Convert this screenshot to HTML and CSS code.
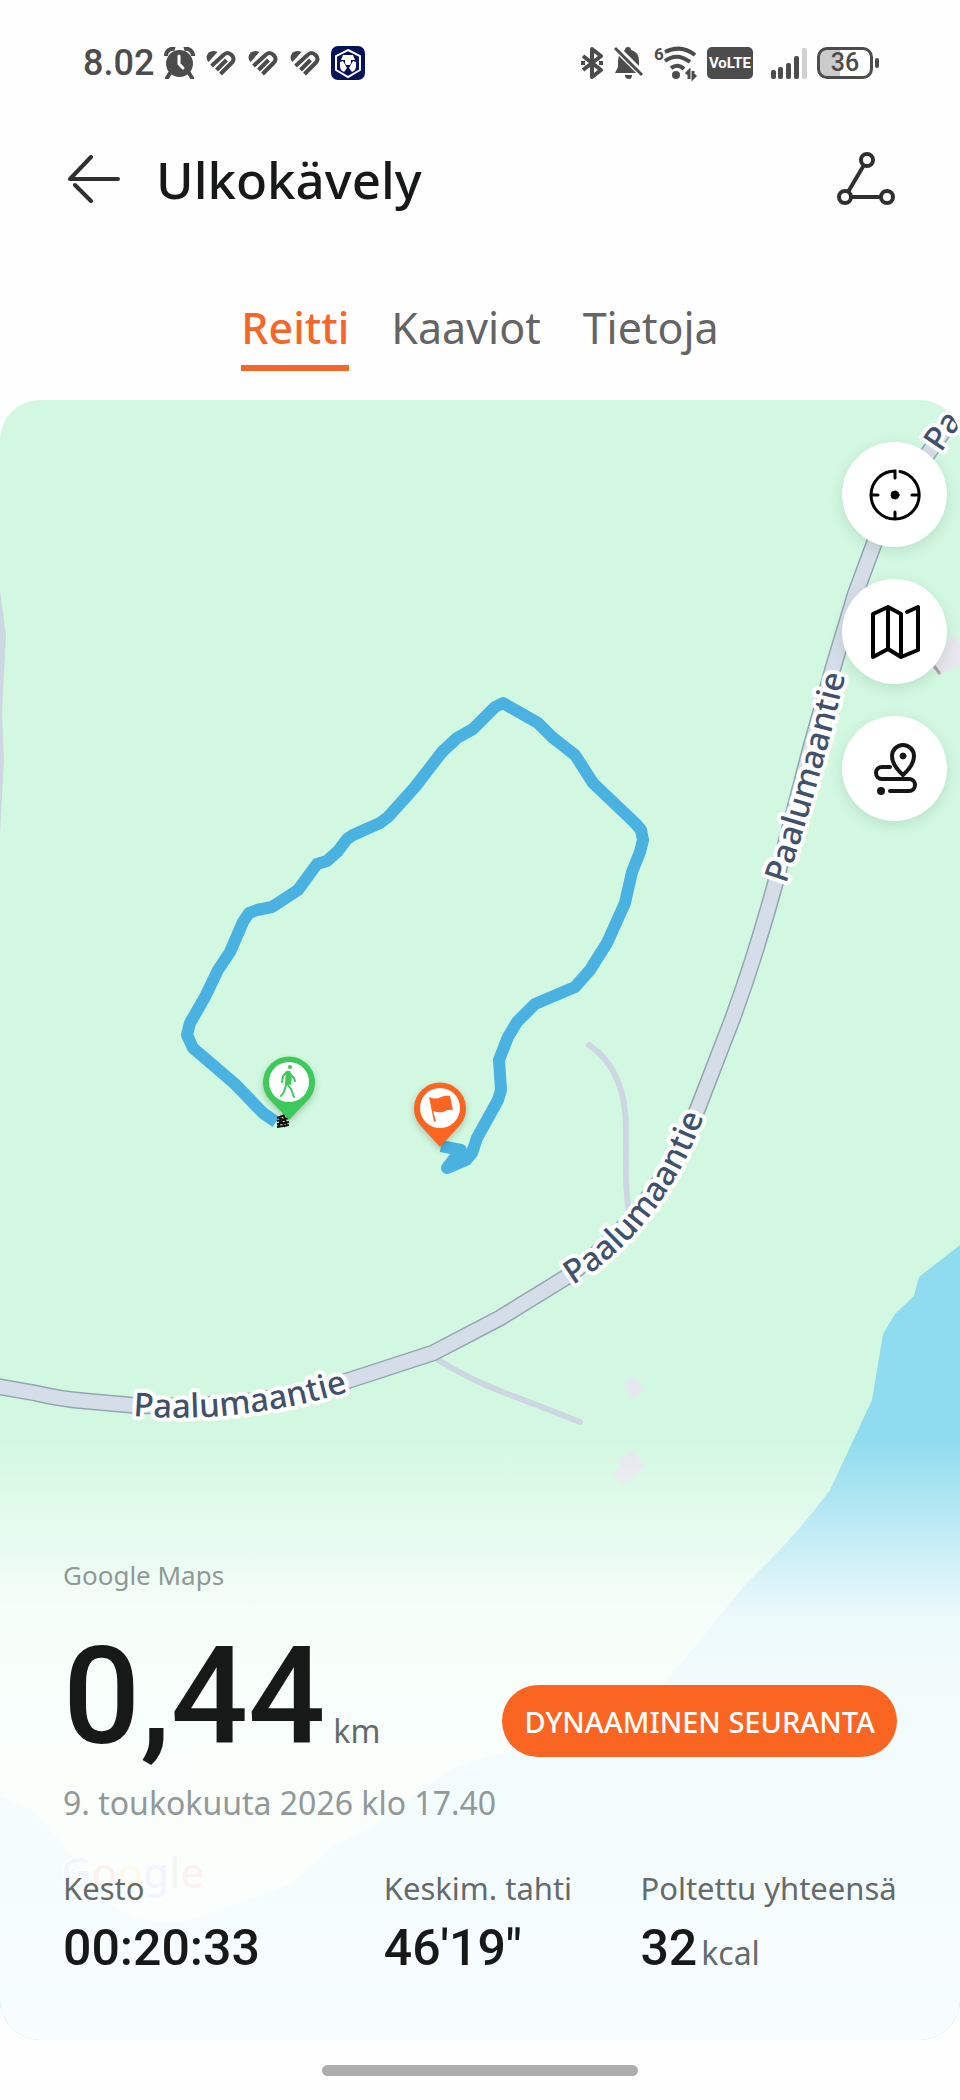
FILE: index.html
```html
<!DOCTYPE html>
<html lang="fi">

<head>
    <meta charset="UTF-8">
    <meta name="viewport" content="width=device-width, initial-scale=1.0">
    <title>Ulkokävely</title>
    <link rel="stylesheet" href="styles.css">
</head>

<body>

    <div class="status-bar">
        <div class="status-group">
            <span class="time">8.02</span>
            <svg width="31" height="32" viewBox="0 0 31 32" fill="#4c4c4c">
                <circle cx="15.500" cy="16.500" r="13.500" />
                <path d="M2 9a7 7 0 0 1 9-7M29 9a7 7 0 0 0-9-7" fill="none" stroke="#4c4c4c" stroke-width="4" />
                <path d="M6 26l-3 5M25 26l3 5" stroke="#4c4c4c" stroke-width="4" stroke-linecap="round" />
                <path d="M15 9v8l4 4" fill="none" stroke="#fff" stroke-width="3" stroke-linecap="round" />
            </svg>
            <svg class="heart" viewBox="0 0 29 26"><use href="#heart" /></svg>
            <svg class="heart" viewBox="0 0 29 26"><use href="#heart" /></svg>
            <svg class="heart" viewBox="0 0 29 26">
                <g id="heart" fill="none" stroke="#4c4c4c" stroke-width="4">
                    <path d="M2 12Q0 10 0 7Q1 1 7 1Q9 1 11 2z" fill="#4c4c4c" stroke="none" />
                    <path d="M5 16L17 5Q21 1 25 5T25 13L14 24" />
                    <path d="M10 20L20 10" />
                </g>
            </svg>
            <svg width="34" height="34" viewBox="0 0 34 34">
                <rect width="34" height="34" rx="7" fill="#04125a" />
                <path d="M17 4l12 6v14l-12 7-12-7V10z" fill="none" stroke="#fff" stroke-width="2" />
                <path d="M12 9h10l2 5H10z" fill="#fff" />
                <path d="M14 14h6v3l-1 2h-4l-1-2z" fill="#fff" />
                <path d="M9 16l3-1 4 7-3 4-3-2-1-3zM25 16l-3-1-4 7 3 4 3-2 1-3z" fill="#fff" />
            </svg>
        </div>
        <div class="status-group">
            <svg width="24" height="32" viewBox="0 0 24 32" fill="none" stroke="#4c4c4c" stroke-width="4" stroke-linejoin="round">
                <path d="M3 9l18 14-9 7V2l9 7L3 23" />
                <path d="M1 16h4M19 16h4" />
            </svg>
            <svg width="30" height="34" viewBox="0 0 30 34" fill="#4c4c4c">
                <path d="M14 1q3 0 3 3 8 2 8 11v6l3 6H1l3-6v-6q0-8 7-11 0-3 3-3z" />
                <path d="M11 29h7q0 4-3 4-4 0-4-4z" />
                <path d="M0 0l29 29" stroke="#fefefe" stroke-width="7" />
                <path d="M1 2l27 27" stroke="#4c4c4c" stroke-width="3" />
            </svg>
            <svg class="wifi" width="43" height="34" viewBox="0 0 43 34" fill="none" stroke="#4c4c4c" stroke-width="4">
                <text x="0" y="14" class="wifi-gen">6</text>
                <path d="M11 6q16-8 30 3" />
                <path d="M11 15q12-9 25 1M17 22q7-5 13 1" />
                <circle cx="22" cy="29" r="4" fill="#4c4c4c" stroke="none" />
                <path d="M32 28l3-3v8M39 25v7l3-3" stroke-width="3" />
            </svg>
            <span class="volte">VoLTE</span>
            <svg width="44" height="32" viewBox="0 0 44 32" fill="#4c4c4c">
                <rect x="8" y="23" width="5" height="9" rx="2" />
                <rect x="15" y="20" width="5" height="12" rx="2" />
                <rect x="23" y="16" width="5" height="16" rx="2" />
                <rect x="31" y="9" width="5" height="23" rx="2" />
                <rect x="39" y="1" width="5" height="31" rx="2" fill="#d0d0d0" />
            </svg>
            <span class="battery">36</span>
        </div>
    </div>

    <header class="header">
        <button class="icon-btn" type="button" aria-label="Takaisin">
            <svg width="52" height="48" viewBox="0 0 52 48" fill="none" stroke="#303030" stroke-width="4" stroke-linecap="round" stroke-linejoin="round">
                <path d="M23 2L2 24h48M7 30l16 16" />
            </svg>
        </button>
        <h1>Ulkokävely</h1>
        <button class="icon-btn share" type="button" aria-label="Jaa">
            <svg width="60" height="54" viewBox="0 0 60 54" fill="none" stroke="#303030" stroke-width="4">
                <circle cx="31" cy="8" r="6" />
                <circle cx="9" cy="45" r="6" />
                <circle cx="51" cy="45" r="6" />
                <path d="M28 13L12 40M15 45h30" />
            </svg>
        </button>
    </header>

    <nav class="tabs">
        <a href="#reitti" class="tab active">Reitti</a>
        <a href="#kaaviot" class="tab">Kaaviot</a>
        <a href="#tietoja" class="tab">Tietoja</a>
    </nav>

    <main id="reitti" class="map-card">
        <svg class="map" viewBox="0 400 960 1640" preserveAspectRatio="xMidYMin slice">
            <defs>
                <path id="main-road" d="M-5 1386L35 1393Q60 1399 85 1401L130 1405Q180 1408 240 1402T350 1380L433 1353L500 1318L565 1278Q655 1215 698 1108L732 1020Q756 955 777 877L810 750L833 668L855 595L875 541L927 455L965 400" />
                <path id="label-1" d="M133 1416Q245 1425 360 1388" />
                <path id="label-2" d="M573 1285Q666 1228 708 1105" />
                <path id="label-3" d="M786 884Q820 785 850 655" />
                <path id="label-4" d="M941 453L985 388" />
            </defs>

            <!-- vesi -->
            <path class="water" d="M960 1245L919 1277L914 1296L895 1314L883 1334L872 1400L830 1490Q800 1530 770 1560L745 1585L700 1640L665 1682Q620 1735 560 1742T450 1770L370 1828L335 1845L290 1885L190 1920Q140 1930 105 1900L60 1840L30 1809L0 1796V2040H960Z" />

            <!-- tiet ja rakennukset -->
            <path class="path-fill" d="M0 590L6 635L2 712L4 760L0 835Z" />
            <path class="path" d="M589 1045Q627 1070 626 1133T629 1210" />
            <path class="path" d="M435 1358Q470 1380 505 1393T580 1422" />
            <path class="building" d="M624 1383L635 1377L644 1391L632 1399Z" />
            <path class="building" d="M618 1460L633 1451L645 1467L622 1485L612 1473L621 1467Z" />
            <path class="building" d="M953 633L960 645V665L940 675L934 666Z" />
            <path d="M934 666L940 674" stroke="#a9a3a8" stroke-width="3" />
            <path class="building" d="M150 1755L190 1752L192 1785L155 1785Z" />
            <use href="#main-road" class="road-edge" />
            <use href="#main-road" class="road" />

            <text class="road-name"><textPath href="#label-1">Paalumaantie</textPath></text>
            <text class="road-name"><textPath href="#label-2">Paalumaantie</textPath></text>
            <text class="road-name"><textPath href="#label-3">Paalumaantie</textPath></text>
            <text class="road-name"><textPath href="#label-4">Pa</textPath></text>

            <!-- kuljettu reitti -->
            <path class="route" d="M276 1122L263 1113L235 1084L193 1048L187 1035L190 1023L205 997L218 970L230 952L243 922L249 913L257 910L272 907L298 890L317 864L327 861L338 851L347 839L353 835L380 823L388 817L415 787L442 752L457 738L473 729L495 707L503 703L538 723L552 737L575 755L593 783L635 823L641 830L643 840L640 852L632 872L625 903L607 943L590 970L575 987L535 1004L517 1022L508 1037L499 1060L501 1090L498 1100L477 1138L472 1153L466 1160L447 1168L461 1150L441 1146" />

            <g stroke="#111" stroke-width="2">
                <path d="M277 1118l8-3M277 1121l12-3M277 1124l12-2M277 1127l12-2M279 1117l6 10M284 1116l3 10M282 1118l-4 9" />
            </g>
            <g class="pin">
                <path d="M289 1120L269 1099A26 26 0 1 1 309 1099Z" fill="#3cca5b" />
                <circle cx="289" cy="1082" r="20" fill="#fff" />
                <circle cx="290" cy="1067" r="2" fill="#3cca5b" />
                <path d="M287 1072l-4 4-1 6M289 1073l5 5 1 3M288 1073l-1 11 4 5 3 8M286 1085l-2 7-3 4" fill="none" stroke="#3cca5b" stroke-width="2" stroke-linecap="round" stroke-linejoin="round" />
                <path d="M286 1071h4l2 5-1 9-6-1z" fill="#3cca5b" />
            </g>
            <g class="pin">
                <path d="M440 1147L420 1125A26 26 0 1 1 460 1125Z" fill="#fb6522" />
                <circle cx="440" cy="1108" r="20" fill="#fff" />
                <path d="M429 1097q6 3 12 0 5-2 9-1l3 14q-5-1-10 2-5 1-10-1l3 10-2 1z" fill="#fb6522" />
            </g>

            <text class="watermark" x="61" y="1888"><tspan fill="#4285f4">G</tspan><tspan fill="#ea4335">o</tspan><tspan fill="#fbbc05">o</tspan><tspan fill="#4285f4">g</tspan><tspan fill="#34a853">l</tspan><tspan fill="#ea4335">e</tspan></text>
        </svg>

        <div class="map-tools">
            <button class="round-btn" type="button" aria-label="Kohdista">
                <svg width="52" height="52" viewBox="0 0 52 52" fill="none" stroke="#000" stroke-width="3" stroke-linecap="round">
                    <path d="M26 9V2A24 24 0 0 0 26 50A24 24 0 0 0 31 2.500" />
                    <path d="M3 26h6M43 26h6M26 43v6" />
                    <circle cx="26" cy="26" r="4" fill="#000" stroke-width="1" />
                </svg>
            </button>
            <button class="round-btn" type="button" aria-label="Karttatyyppi">
                <svg width="52" height="56" viewBox="0 0 52 56" fill="none" stroke="#000" stroke-width="4" stroke-linejoin="round" stroke-linecap="round">
                    <path d="M38 8l11-5v43l-17 7-13-8-15 8V10l15-7 13 7v43M19 3v42" />
                </svg>
            </button>
            <button class="round-btn" type="button" aria-label="Reitin näyttö">
                <svg width="46" height="54" viewBox="0 0 46 54" fill="none" stroke="#161616" stroke-width="4" stroke-linecap="round" stroke-linejoin="round">
                    <path d="M31 33Q20 23 20 14a11 11 0 0 1 22 0Q42 23 31 33z" />
                    <circle cx="31" cy="14" r="3" fill="#161616" stroke-width="1" />
                    <path d="M18 25h-8a6 6 0 0 0 0 12h27a6 6 0 0 1 0 12H18" />
                    <circle cx="9" cy="49" r="4" fill="#161616" stroke="none" />
                </svg>
            </button>
        </div>

        <section class="summary">
            <p class="map-source">Google Maps</p>
            <div class="distance-row">
                <p class="distance"><span>0,44</span><span class="unit">km</span></p>
                <button class="track-btn" type="button">DYNAAMINEN SEURANTA</button>
            </div>
            <p class="date">9. toukokuuta 2026 klo 17.40</p>
            <dl class="stats">
                <div>
                    <dt>Kesto</dt>
                    <dd>00:20:33</dd>
                </div>
                <div>
                    <dt>Keskim. tahti</dt>
                    <dd>46'19"</dd>
                </div>
                <div>
                    <dt>Poltettu yhteensä</dt>
                    <dd><span>32</span><span class="unit">kcal</span></dd>
                </div>
            </dl>
        </section>
    </main>

    <div class="home-bar"></div>

</body>

</html>
```
FILE: styles.css
```css
* {
    box-sizing: border-box;
}

body {
    display: flex;
    flex-direction: column;
    min-height: 100vh;
    margin: 0;
    background-color: #fefefe;
    color: #171919;
    font-family: "Noto Sans", sans-serif;
}

h1, p, dl, dd {
    margin: 0;
}

svg {
    flex-shrink: 0;
}

button {
    border: none;
    padding: 0;
    background: none;
    font-family: inherit;
    cursor: pointer;
}

/* tilarivi */
.status-bar {
    display: flex;
    justify-content: space-between;
    align-items: center;
    height: 126px;
    padding: 0 83px;
    color: #4c4c4c;
    font-family: Roboto, sans-serif;
}

.status-group {
    display: flex;
    align-items: center;
    gap: 10px;
}

.time {
    font-size: 36px;
    font-weight: 500;
}

.heart {
    width: 32px;
    height: 26px;
}

.wifi {
    overflow: visible;
}

.wifi-gen {
    fill: #4c4c4c;
    stroke: none;
    font-size: 17px;
    font-weight: 700;
}

.volte {
    padding: 0 2px;
    border-radius: 5px;
    background-color: #4c4c4c;
    color: #fff;
    font-size: 15px;
    font-weight: 700;
    line-height: 32px;
}

.battery {
    position: relative;
    width: 56px;
    margin-right: 4px;
    border: 3px solid #4c4c4c;
    border-radius: 10px;
    background: linear-gradient(to right, #cbcbcb 40%, #fff 40%);
    font-size: 25px;
    font-weight: 500;
    line-height: 26px;
    text-align: center;
}

.battery::after {
    content: "";
    position: absolute;
    top: 8px;
    right: -9px;
    width: 4px;
    height: 10px;
    border-radius: 2px;
    background-color: #4c4c4c;
}

/* otsikko */
.header {
    display: flex;
    align-items: center;
    height: 106px;
    padding: 0 64px 0 68px;
}

.header h1 {
    padding-left: 36px;
    font-size: 51px;
    font-weight: 500;
    line-height: 72px;
}

.icon-btn {
    display: flex;
}

.share {
    margin-left: auto;
}

.tabs {
    display: flex;
    justify-content: center;
    gap: 42px;
    padding: 66px 20px 29px;
}

.tab {
    padding-bottom: 7px;
    border-bottom: 6px solid transparent;
    color: #646464;
    font-size: 43px;
    line-height: 60px;
    text-decoration: none;
}

.tab.active {
    border-image: linear-gradient(#f4662a, #f4662a) 1;
    color: #f4662a;
    font-weight: 500;
}

/* kartta */
.map-card {
    position: relative;
    display: flex;
    flex: 1;
    flex-direction: column;
    border-radius: 40px;
    background-color: #d2f8e1;
    overflow: hidden;
}

.map {
    position: absolute;
    top: 0;
    left: 0;
    width: 100%;
    height: 100%;
}

.water {
    fill: #8fdbef;
}

.path-fill {
    fill: #cdd6e2;
}

.path {
    fill: none;
    stroke: #cdd6e2;
    stroke-width: 6;
    stroke-linecap: round;
}

.building {
    fill: #e8e6ee;
}

.road-edge {
    fill: none;
    stroke: #94a6b0;
    stroke-width: 17;
}

.road {
    fill: none;
    stroke: #d5dde9;
    stroke-width: 14;
}

.road-name {
    fill: #42516b;
    stroke: #fff;
    stroke-width: 8;
    stroke-linejoin: round;
    paint-order: stroke;
    font-size: 33px;
    font-weight: 500;
}

.route {
    fill: none;
    stroke: #4ab2e0;
    stroke-width: 12;
    stroke-linejoin: round;
}

.pin {
    filter: drop-shadow(0 3px 3px rgba(0, 0, 0, 0.2));
}

.watermark {
    stroke: #fff;
    stroke-width: 4;
    paint-order: stroke;
    font-size: 42px;
    font-weight: 500;
}

.map-tools {
    position: relative;
    display: flex;
    flex-direction: column;
    align-self: flex-end;
    gap: 32px;
    padding: 42px 13px 0;
}

.round-btn {
    display: flex;
    justify-content: center;
    align-items: center;
    width: 105px;
    height: 105px;
    border-radius: 50%;
    background-color: #fff;
    box-shadow: 0 4px 14px rgba(0, 60, 30, 0.12);
}

/* yhteenveto kartan päällä */
.summary {
    position: relative;
    margin-top: auto;
    padding: 120px 63px 62px;
    background: linear-gradient(to bottom,
        rgba(253, 255, 254, 0) 0,
        rgba(253, 255, 254, 0.25) 54px,
        rgba(253, 255, 254, 0.6) 124px,
        rgba(253, 255, 254, 0.85) 180px,
        rgba(253, 255, 254, 0.89) 240px,
        rgba(253, 255, 254, 0.92) 400px,
        rgba(253, 255, 254, 0.95) 100%);
}

.map-source {
    color: #909894;
    font-size: 26px;
    line-height: 36px;
}

.distance-row {
    display: flex;
    justify-content: space-between;
    align-items: flex-end;
    margin-top: 44px;
}

.distance {
    font-family: Roboto, sans-serif;
    font-size: 136px;
    font-weight: 500;
    line-height: 120px;
    white-space: nowrap;
}

.unit {
    margin-left: 8px;
    color: #646a6a;
    font-family: "Noto Sans", sans-serif;
    font-size: 32px;
    font-weight: 400;
    line-height: 1;
}

.track-btn {
    height: 72px;
    padding: 0 22px;
    border-radius: 36px;
    background-color: #fb6522;
    color: #fff;
    font-size: 29px;
    font-weight: 500;
    white-space: nowrap;
}

.date {
    margin-top: 24px;
    color: #929898;
    font-size: 32px;
    line-height: 44px;
}

.stats {
    display: grid;
    grid-template-columns: 5fr 4fr 4fr;
    margin-top: 41px;
    white-space: nowrap;
}

.stats dt {
    color: #646a6a;
    font-size: 31px;
    line-height: 44px;
}

.stats dd {
    margin-top: 8px;
    font-family: Roboto, sans-serif;
    font-size: 50px;
    font-weight: 500;
    line-height: 60px;
}

.stats .unit {
    margin-left: 4px;
}

.home-bar {
    width: 33%;
    height: 11px;
    margin: 25px auto 24px;
    border-radius: 6px;
    background-color: #adadad;
}
```
